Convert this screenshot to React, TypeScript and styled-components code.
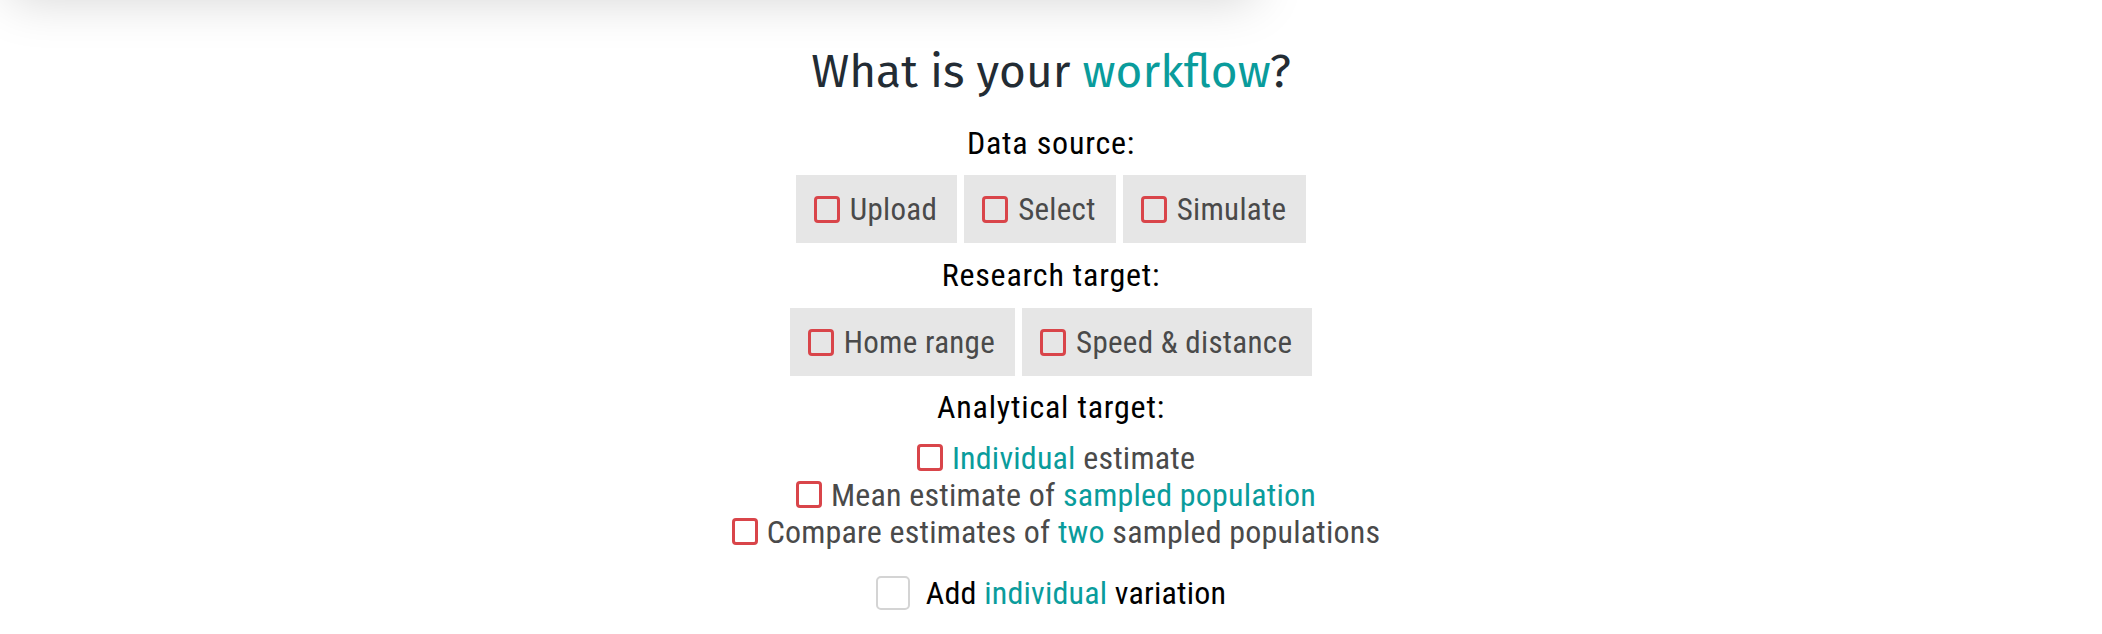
import React from "react";
import styled, { createGlobalStyle } from "styled-components";

const GlobalStyle = createGlobalStyle`
  html, body {
    margin: 0;
    padding: 0;
    background: #ffffff;
  }
  body {
    font-family: "Roboto Condensed", Roboto, sans-serif;
    overflow: hidden;
  }
`;

const TEAL = "#0a9c9c";

// shadow of the panel that sits just above the visible area
const TopShade = styled.div`
  position: absolute;
  top: -100px;
  left: 10px;
  width: 1245px;
  height: 100px;
  background: #fff;
  box-shadow: 0 0 50px rgba(0, 0, 0, 0.17);
`;

const Page = styled.main`
  position: relative;
  width: 2102px;
  height: 634px;
  display: flex;
  flex-direction: column;
  align-items: center;
`;

const Title = styled.h1`
  margin: 41px 0 0;
  font-family: "Fira Sans", Lato, sans-serif;
  font-weight: 400;
  font-size: 46px;
  line-height: 62px;
  color: #232c34;
`;

const Hi = styled.span`
  color: ${TEAL};
`;

const GroupLabel = styled.div<{ $top: number }>`
  margin-top: ${(p) => p.$top}px;
  font-size: 32px;
  line-height: 40px;
  letter-spacing: 0.8px;
  color: #000;
`;

const ButtonRow = styled.div<{ $top: number }>`
  display: flex;
  gap: 7px;
  margin-top: ${(p) => p.$top}px;
`;

const ToggleBox = styled.label`
  display: flex;
  align-items: center;
  gap: 10px;
  height: 68px;
  padding: 0 20px 0 18px;
  background: #e6e6e6;
  font-size: 31px;
  letter-spacing: 0.3px;
  color: #4a4a4a;
`;

const RedCheck = styled.span`
  box-sizing: border-box;
  width: 26px;
  height: 27px;
  border: 3px solid #d9454a;
  border-radius: 4px;
  flex: none;
`;

const OptionList = styled.div`
  display: flex;
  flex-direction: column;
  align-items: center;
  margin-top: 12px;
  padding-left: 10px;
`;

const Option = styled.label`
  display: flex;
  align-items: center;
  gap: 9px;
  height: 37px;
  font-size: 32px;
  letter-spacing: 0.2px;
  color: #4a4a4a;
`;

const VariationRow = styled.label`
  display: flex;
  align-items: center;
  gap: 16px;
  height: 34px;
  margin-top: 26px;
  font-size: 32px;
  letter-spacing: 0.2px;
  color: #000;
`;

const GrayCheck = styled.span`
  box-sizing: border-box;
  width: 34px;
  height: 34px;
  border: 2px solid #d4d4d4;
  border-radius: 5px;
  background: #fff;
`;

export default function App() {
  return (
    <Page>
      <GlobalStyle />
      <TopShade />
      <Title>
        What is your <Hi>workflow</Hi>?
      </Title>

      <GroupLabel $top={20}>Data source:</GroupLabel>
      <ButtonRow $top={12}>
        <ToggleBox><RedCheck />Upload</ToggleBox>
        <ToggleBox><RedCheck />Select</ToggleBox>
        <ToggleBox><RedCheck />Simulate</ToggleBox>
      </ButtonRow>

      <GroupLabel $top={12}>Research target:</GroupLabel>
      <ButtonRow $top={13}>
        <ToggleBox><RedCheck />Home range</ToggleBox>
        <ToggleBox><RedCheck />Speed &amp; distance</ToggleBox>
      </ButtonRow>

      <GroupLabel $top={11}>Analytical target:</GroupLabel>
      <OptionList>
        <Option><RedCheck /><span><Hi>Individual</Hi> estimate</span></Option>
        <Option><RedCheck /><span>Mean estimate of <Hi>sampled population</Hi></span></Option>
        <Option><RedCheck /><span>Compare estimates of <Hi>two</Hi> sampled populations</span></Option>
      </OptionList>

      <VariationRow>
        <GrayCheck />
        <span>Add <Hi>individual</Hi> variation</span>
      </VariationRow>
    </Page>
  );
}
